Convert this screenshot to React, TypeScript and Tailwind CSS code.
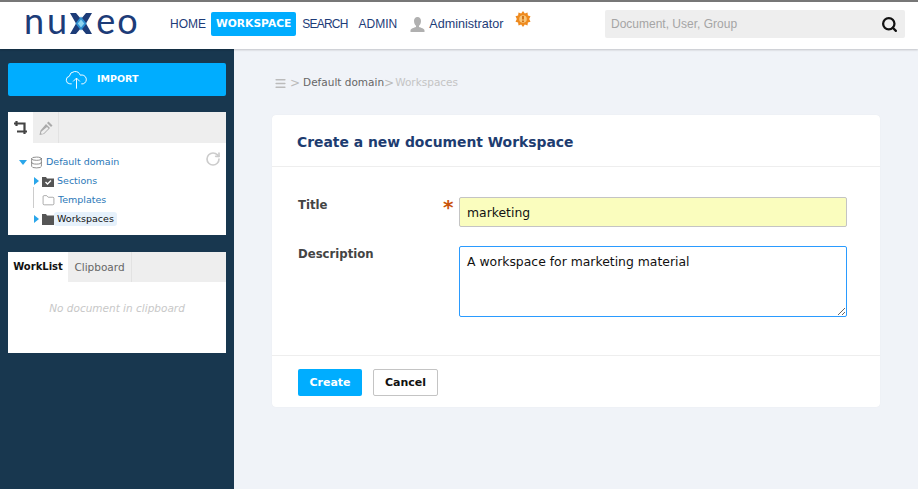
import { Database, Folder, RotateCw, Search, Menu } from "lucide-react";

const lucida = "font-['DejaVu_Sans',sans-serif]";
const helv = "font-['Liberation_Sans',sans-serif]";

function Logo() {
  return (
    <div className="flex items-center font-['Lato',sans-serif] text-[36px] leading-[18px] font-normal text-[#1d3c78] ml-[24px] w-[116px] h-[24px]">
      <span className="tracking-[3px] mb-[9px]">nu</span>
      <svg width="22" height="21" viewBox="0 0 22 21" className="shrink-0 mb-[2px] mr-[4px]">
        <path d="M0 0h6l5 6 5-6h6l-6 10.500 6 10.500h-6l-5-6-5 6H0l6-10.500z" fill="#1d3c78" />
        <path d="M11 3.500l5.500 7-5.500 7-5.500-7z" fill="#2f8fd0" />
        <path d="M11 6.500l3.200 4-3.200 4-3.200-4z" fill="#8fd6f0" />
      </svg>
      <span className="tracking-[2px] mb-[9px]">eo</span>
    </div>
  );
}

function Header() {
  return (
    <header className={`${helv} relative z-10 flex items-center h-[49px] pb-[3px] bg-white border-t-2 border-[#777] shadow-[0_1px_2px_rgba(0,0,0,0.2)]`}>
      <Logo />
      <nav className="flex items-center ml-[30px] text-[12px] text-[#1d3c78]">
        <a className="mr-[5px]">HOME</a>
        <a className={`${lucida} px-[5px] h-[24px] leading-[23px] bg-[#00adff] rounded-[2px] text-white font-bold text-[10.700px] mr-[6px]`}>WORKSPACE</a>
        <a className="mr-[11px] tracking-[-0.8px]">SEARCH</a>
        <a>ADMIN</a>
      </nav>
      <svg width="15" height="15" viewBox="0 0 15 15" className="ml-[13px]">
        <path d="M7.500 0c2.300 0 3.500 1.700 3.500 4s-1 4-2 4.800v1.200c2 .8 5.500 1.500 5.500 3.500V15H.5v-1.500C.5 11.500 4 10.800 6 10V8.800C5 8 4 6.300 4 4s1.200-4 3.500-4z" fill="#b0b0b0" />
      </svg>
      <span className="ml-[4px] text-[12.600px] text-[#1d3c78]">Administrator</span>
      <svg width="16" height="16" viewBox="0 0 16 16" className="ml-[12px] mb-[10px]">
        <path d="M8 0l1.800 2.400L12.500 1.500l.4 2.900 2.600.9-1.300 2.700 1.300 2.700-2.600.9-.4 2.900-2.700-.9L8 16l-1.800-2.400-2.700.9-.4-2.900-2.600-.9L1.800 8 .5 5.300l2.600-.9.4-2.900 2.700.9z" fill="#ee8a1e" />
        <circle cx="8" cy="8" r="3.800" fill="#f8c67a" />
        <path d="M7.200 5h1.600v3.500H7.200zM7.200 9.500h1.600V11H7.200z" fill="#c75f00" />
      </svg>
      <div className="ml-auto mr-[13px] flex items-center w-[300px] h-[28px] bg-[#eee] rounded-[2px] pl-[6px] pr-[7px] text-[12px] text-[#a5a5a5]">
        <span>Document, User, Group</span>
        <Search size={17} strokeWidth={3.200} className="ml-auto text-[#111]" />
      </div>
    </header>
  );
}

function Sidebar() {
  return (
    <aside className={`${lucida} w-[234px] shrink-0 bg-[#18374f] px-[8px] pt-[14px] flex flex-col`}>
      <button className="flex items-center h-[33px] pl-[57px] bg-[#00adff] rounded-[2px] text-white font-bold text-[9.500px] gap-[9px]">
        <svg width="23" height="20" viewBox="0 0 24 20" fill="none" stroke="#fff" strokeWidth="1">
          <path d="M7 14H5a4 4 0 0 1-.5-7.900A6 6 0 0 1 16 5a4.500 4.500 0 0 1 3 9h-2" />
          <path d="M12 19V8M8.500 11.500L12 8l3.500 3.500" />
        </svg>
        IMPORT
      </button>

      <div className="mt-[16px] h-[123px] bg-white flex flex-col">
        <div className="flex h-[31px] bg-[#eee] shrink-0">
          <div className="w-[25px] bg-white flex items-center justify-center">
            <svg width="13" height="13" viewBox="0 0 13 13" fill="none" stroke="#444" strokeWidth="2.200">
              <path d="M0 2.500H10.500V9M2.500 0V5M3 10.500H13M10.500 8V13" />
            </svg>
          </div>
          <div className="w-[26px] flex items-center justify-center border-r border-[#e2e2e2]">
            <svg width="14" height="14" viewBox="0 0 14 14" fill="#aaa">
              <path d="M9.500 .5l4 4-1.500 1.500-4-4zM7 3l4 4-6 6-4.500 1 1-4.500zM2.500 10.500l-.6 1.600 1 1 1.600-.6 5-5-1.500-1.500z" />
            </svg>
          </div>
        </div>
        <div className="relative pl-[11px] pt-[9.500px] text-[9.500px] text-[#2b78b8]">
          <RotateCw size={16} strokeWidth={2.500} className="absolute right-[5px] top-[8px] text-[#ccc]" />
          <div className="absolute left-[25px] top-[44px] h-[21px] border-l border-[#ccc]" />
          <div className="flex items-center h-[19px]">
            <span className="w-0 h-0 border-x-[4px] border-x-transparent border-t-[5px] border-t-[#2aa6ea]" />
            <Database size={13} strokeWidth={1.500} className="ml-[3px] text-[#777]" />
            <span className="ml-[3px]">Default domain</span>
          </div>
          <div className="flex items-center h-[19px] pl-[15px]">
            <span className="w-0 h-0 border-y-[4px] border-y-transparent border-l-[5px] border-l-[#2aa6ea]" />
            <svg width="12" height="11" viewBox="0 0 12 11" className="ml-[3px]">
              <path d="M0 1h4l1 1.500h7V11H0z" fill="#555" />
              <path d="M3.500 6l2 2L9 4.500" fill="none" stroke="#fff" strokeWidth="1.400" />
            </svg>
            <span className="ml-[3px]">Sections</span>
          </div>
          <div className="flex items-center h-[19px] pl-[23px]">
            <Folder size={13} strokeWidth={1} className="text-[#666]" />
            <span className="ml-[3px]">Templates</span>
          </div>
          <div className="flex items-center h-[19px] pl-[15px]">
            <span className="w-0 h-0 border-y-[4px] border-y-transparent border-l-[5px] border-l-[#2aa6ea]" />
            <svg width="12" height="11" viewBox="0 0 12 11" className="ml-[3px]">
              <path d="M0 0h4l1 1.500h7V11H0z" fill="#555" />
            </svg>
            <span className="px-[3px] bg-[#e6f1fb] rounded-[3px] text-[#111]">Workspaces</span>
          </div>
        </div>
      </div>

      <div className="mt-[17px] h-[101px] bg-white flex flex-col">
        <div className="flex h-[30px] bg-[#eee] text-[10.500px] leading-[30px] shrink-0">
          <div className="w-[60px] bg-white text-center font-bold text-[10px] text-[#111]">WorkList</div>
          <div className="w-[64px] text-center text-[#666] border-r border-[#e2e2e2]">Clipboard</div>
        </div>
        <p className="mt-[19px] text-center italic text-[10.500px] text-[#c8c8c8]">No document in clipboard</p>
      </div>
    </aside>
  );
}

function Form() {
  return (
    <section className={`${lucida} mt-[24px] mr-[38px] bg-white rounded-[4px] shadow-[0_0_1px_rgba(0,0,0,0.08)]`}>
      <h1 className="h-[52px] pl-[25px] pt-[17px] text-[13.900px] leading-[20px] font-bold text-[#1d3c70] border-b border-[#eee]">
        Create a new document Workspace
      </h1>
      <div className="h-[188px] pl-[26px] pr-[33px] pt-[30px] text-[12.400px]">
        <div className="flex h-[30px]">
          <label className="w-[145px] font-bold text-[11.700px] text-[#444] leading-[17px]">Title</label>
          <span className="w-[16px] text-[#c9530a] text-[20px] leading-[20px] font-bold">*</span>
          <div className="flex-1 bg-[#fafdbe] border border-[#c4c4c4] rounded-[2px] pl-[7px] leading-[29px] text-[#111]">marketing</div>
        </div>
        <div className="flex mt-[19px] h-[71px]">
          <label className="w-[161px] font-bold text-[11.700px] text-[#444] leading-[17px]">Description</label>
          <textarea
            readOnly
            className="flex-1 h-[71px] border border-[#2a9bff] rounded-[2px] pl-[7px] pt-[6px] leading-[17px] text-[#111] outline-none"
            value="A workspace for marketing material"
          />
        </div>
      </div>
      <div className="flex h-[52px] pl-[26px] pt-[13px] gap-[11px] border-t border-[#eee] text-[11px] font-bold">
        <button className="w-[64px] h-[27px] pt-[1px] bg-[#00adff] rounded-[2px] text-white">Create</button>
        <button className="w-[65px] h-[27px] pt-[1px] bg-white border border-[#c4c4c4] rounded-[2px] text-[#111]">Cancel</button>
      </div>
    </section>
  );
}

export default function App() {
  return (
    <div className="flex flex-col w-[918px] h-[489px] overflow-hidden bg-[#f0f3f8]">
      <Header />
      <div className="flex flex-1">
        <Sidebar />
        <main className="flex-1 pl-[38px]">
          <div className={`${lucida} flex items-center h-[16px] mt-[26px] text-[10.500px] text-[#666]`}>
            <Menu size={13} strokeWidth={3} className="text-[#bbb] ml-[2px]" />
            <span className="ml-[3px] text-[#bbb] text-[12px]">&gt;</span>
            <span className="ml-[3px]">Default domain</span>
            <span className="text-[#bbb] text-[12px]">&gt;</span>
            <span className="ml-[1px] text-[#c4c4c4]">Workspaces</span>
          </div>
          <Form />
        </main>
      </div>
    </div>
  );
}
